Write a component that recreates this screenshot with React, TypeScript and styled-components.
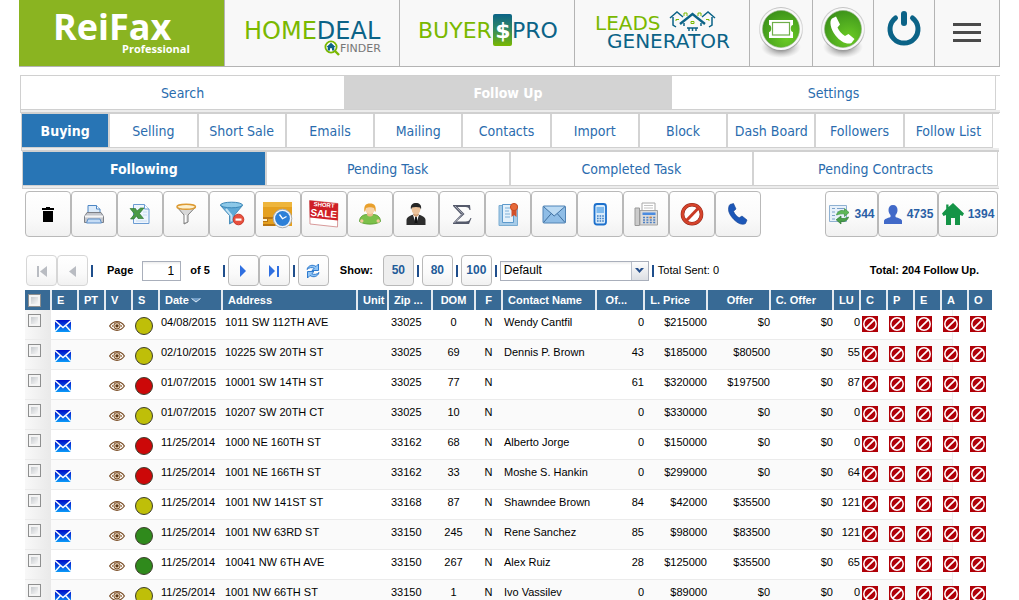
import React from "react";
import styled, { createGlobalStyle, css } from "styled-components";

const GlobalStyle = createGlobalStyle`
  html { scrollbar-width: none; }
  *, *::before, *::after { box-sizing: border-box; }
  body {
    margin: 0;
    background: #fff;
    color: #000;
    font: 11px/13px "Liberation Sans", Arial, sans-serif;
  }
  button, input, select { font: inherit; color: inherit; margin: 0; }
  svg { display: block; flex: none; }
`;

const GREEN = "#7ab800";
const TEAL = "#0b6387";

/* ---------- top banner ---------- */

const Banner = styled.header`
  display: grid;
  grid-template-columns: 206fr 175fr 175fr 175fr 63fr 61fr 61fr 65fr;
  height: 67px;
  margin: 0 19px;
  border-bottom: 1px solid #b4b4b4;
`;

const BannerLink = styled.a<{ $brand?: boolean }>`
  display: flex;
  align-items: center;
  justify-content: center;
  overflow: hidden;
  text-decoration: none;
  border-right: 1px solid #b4b4b4;
  background: ${(p) => (p.$brand ? "#8ab421" : "#f8f8f8")};
`;

const BannerButton = styled.button`
  display: flex;
  align-items: center;
  justify-content: center;
  padding: 0;
  border: 0;
  border-right: 1px solid #b4b4b4;
  background: #f8f8f8;
  cursor: pointer;
`;

const LogoSvg = styled.svg`
  font-family: "DejaVu Sans", Verdana, sans-serif;
`;

const ReiFaxLogo = () => (
  <LogoSvg width="205" height="66" viewBox="0 0 205 66" fill="#fff" fontWeight="700">
    <text x="34" y="40" fontFamily="'Open Sans', sans-serif" fontSize="36">ReiFax</text>
    <text x="103" y="53" fontFamily="'Open Sans', sans-serif" fontSize="11">Professional</text>
  </LogoSvg>
);

const HomeDealLogo = () => (
  <LogoSvg width="174" height="66" viewBox="0 0 174 66">
    <text x="19" y="39" fontSize="24" fill={GREEN}>
      HOME<tspan fill={TEAL}>DEAL</tspan>
    </text>
    <circle cx="106" cy="47" r="5.6" fill="#fff" stroke={GREEN} strokeWidth="1.8" />
    <path d="M110 51l4 4" stroke={GREEN} strokeWidth="2.4" />
    <path d="M101.500 47l4.500-4.200 4.500 4.200h-1.200v3.500h-2.300v-2.300h-2v2.300h-2.300V47z" fill={TEAL} />
    <text x="115" y="52" fontSize="11" fill="#777">FINDER</text>
  </LogoSvg>
);

const BuyersProLogo = () => (
  <LogoSvg width="174" height="66" viewBox="0 0 174 66">
    <defs>
      <linearGradient id="dollar" x1="0" y1="0" x2="0" y2="1">
        <stop offset="0" stopColor="#0b6387" />
        <stop offset="0.45" stopColor="#2f8766" />
        <stop offset="1" stopColor="#7ab800" />
      </linearGradient>
    </defs>
    <text x="18" y="38" fontSize="22" fill={GREEN}>BUYER</text>
    <rect x="93" y="14" width="19" height="32" rx="2" fill="url(#dollar)" />
    <text x="103" y="38" fontSize="22" fontWeight="700" fill="#fff" textAnchor="middle">$</text>
    <text x="112" y="38" fontSize="22" fill={TEAL}>PRO</text>
  </LogoSvg>
);

const LeadsLogo = () => (
  <LogoSvg width="174" height="66" viewBox="0 0 174 66">
    <text x="20" y="30" fontSize="20" fill={GREEN}>LEADS</text>
    <text x="32" y="48" fontSize="20" fill={TEAL}>GENERATOR</text>
    <g fill="none" stroke={TEAL} strokeWidth="1.500">
      <path d="M95 18l7-6 6 5M98 17v8l3 2M140 18l-7-6-6 5M137 17v8l-3 2" />
      <path d="M105 24l12.500-10L130 24" strokeWidth="2.400" />
      <path d="M109 23v3M126 23v3M112 28h11M114 28v3M117.500 28v3M121 28v3" />
    </g>
    <g fill="none" stroke={GREEN} strokeWidth="1">
      <path d="M109 16v-3h3v3M123 16v-3h3v3M101 21v-1.500h3M134 21v-1.500h-3M116 23.500v-2h3v2z" />
    </g>
  </LogoSvg>
);

const Orb = ({ children, id }: { children: React.ReactNode; id: string }) => (
  <svg width="56" height="64" viewBox="0 0 56 64">
    <defs>
      <radialGradient id={id} cx="0.65" cy="0.75" r="0.8">
        <stop offset="0" stopColor="#6bcb24" />
        <stop offset="0.6" stopColor="#4ea91f" />
        <stop offset="1" stopColor="#3a9018" />
      </radialGradient>
      <linearGradient id={id + "rim"} x1="0" y1="0" x2="0" y2="1">
        <stop offset="0" stopColor="#c4c4c4" />
        <stop offset="0.5" stopColor="#dcdcdc" />
        <stop offset="1" stopColor="#9a9a9a" />
      </linearGradient>
      <radialGradient id={id + "shade"}>
        <stop offset="0.4" stopColor="#666" stopOpacity="0.55" />
        <stop offset="1" stopColor="#999" stopOpacity="0" />
      </radialGradient>
    </defs>
    <ellipse cx="28" cy="46" rx="20" ry="11" fill={`url(#${id}shade)`} />
    <circle cx="28" cy="28" r="22" fill={`url(#${id}rim)`} />
    <circle cx="28" cy="28" r="21" fill="#f8f8f8" />
    <circle cx="28" cy="28" r="18.500" fill={`url(#${id})`} stroke="#8fae80" strokeWidth=".6" />
    {children}
  </svg>
);

/* ---------- tab bars ---------- */

const TabBar = styled.nav<{ $left: number; $right: number; $columns: string; $end: number }>`
  display: grid;
  grid-template-columns: ${(p) => p.$columns};
  height: 38px;
  margin: 0 ${(p) => p.$right}px 0 ${(p) => p.$left}px;
  padding: 0 ${(p) => p.$end}px 3px 0;
  border-left: 1px solid #d0d0d0;
  border-top: 1px solid #d0d0d0;
  border-bottom: 1px solid #d0d0d0;
  background: linear-gradient(#ececec, #ececec) bottom / 100% 2px no-repeat;
  font: 14px/18px "DejaVu Sans Condensed", Tahoma, sans-serif;
`;

type TabTone = "none" | "blue" | "gray";

const Tab = styled.a<{ $tone: TabTone; $rule: number }>`
  display: flex;
  align-items: center;
  justify-content: center;
  height: 34px;
  overflow: hidden;
  white-space: nowrap;
  text-decoration: none;
  color: #2a6cae;
  border-bottom: 1px solid #d0d0d0;
  border-right: ${(p) => p.$rule}px solid #d3d3d3;
  &:last-child { border-right-width: 1px; }
  ${(p) => p.$tone === "blue" && css`background: #2875b5; color: #fff; font-weight: 700;`}
  ${(p) => p.$tone === "gray" && css`background: #d3d3d3; color: #fff; font-weight: 700;`}
`;

const Tabs = (props: {
  items: string[]; active: string; tone: TabTone; left: number; right: number;
  end: number; rule: number; columns?: string;
}) => (
  <TabBar
    $left={props.left}
    $right={props.right}
    $end={props.end}
    $columns={props.columns ?? `repeat(${props.items.length}, minmax(0, 1fr))`}
  >
    {props.items.map((t) => (
      <Tab key={t} href="#" $rule={props.rule} $tone={t === props.active ? props.tone : "none"}>{t}</Tab>
    ))}
  </TabBar>
);

/* ---------- tool buttons ---------- */

const Toolbar = styled.div`
  display: flex;
  justify-content: space-between;
  margin: 2px 21px 0 25px;
`;

const Group = styled.div`
  display: flex;
`;

const PushButton = styled.button`
  display: flex;
  align-items: center;
  justify-content: center;
  padding: 0;
  border: 1px solid #b9b9b9;
  border-radius: 4px;
  background: linear-gradient(#fff 0%, #fafafa 60%, #f1f1f1 100%);
  cursor: pointer;
`;

const ToolButton = styled(PushButton)`
  width: 46px;
  height: 46px;
`;

const CountButton = styled(PushButton)<{ $width: number }>`
  width: ${(p) => p.$width}px;
  height: 46px;
  gap: 4px;
  color: #2a5fa5;
  font-size: 12px;
  font-weight: 700;
`;

const Icon = ({ children }: { children: React.ReactNode }) => (
  <svg width="30" height="30" viewBox="0 0 30 30" aria-hidden="true">{children}</svg>
);

const tools: { name: string; art: React.ReactNode }[] = [
  {
    name: "Delete",
    art: <path d="M13 8h4v1h4v2H9V9h4zM10 12h10v11H10z" fill="#000" />,
  },
  {
    name: "Print",
    art: (
      <>
        <path d="M9 15V6.500h8.500L21 10v5z" fill="#dcebfa" stroke="#4d86c4" />
        <path d="M17.500 6.500V10H21" fill="#fff" stroke="#4d86c4" />
        <path d="M8 13.500h14l2.500 4v6h-19v-6z" fill="#c3c6cc" stroke="#7d8087" />
        <path d="M6 17.500h18" stroke="#f4f4f4" strokeWidth="2" />
        <path d="M9 20h12l1.500 4h-15z" fill="#c5dcf5" stroke="#5d8fc8" />
      </>
    ),
  },
  {
    name: "Excel",
    art: (
      <>
        <path d="M8.500 5.500h11l4.500 4.500v14.500H8.500z" fill="#eef5fd" stroke="#6b9cd3" />
        <path d="M19.500 5.500V10H24" fill="#fff" stroke="#6b9cd3" />
        <path d="M18 13h4M18 16h4M11 22h11" stroke="#c8dcf2" />
        <path d="M5 9.500h5.500L12 12l3.500-3H19l-4.500 5.500 4 5H13L11.500 17 9 20H5.500l4-5z" fill="#4b9a45" stroke="#256f2b" strokeWidth=".6" />
      </>
    ),
  },
  {
    name: "Filter",
    art: (
      <>
        <path d="M6 8l7 8v9l4-2v-7l7.500-8z" fill="#d8d8d8" stroke="#7c7c7c" />
        <path d="M14.500 16v7" stroke="#fff" strokeWidth="1.500" />
        <ellipse cx="15.200" cy="7.800" rx="9.300" ry="2.500" fill="#fdf1d0" stroke="#dd9a32" strokeWidth="1.400" />
      </>
    ),
  },
  {
    name: "Remove filter",
    art: (
      <>
        <path d="M3.500 6.500l9 10v8.500l5-3v-6l8-9.500z" fill="#5fa9d6" stroke="#357fb0" strokeWidth=".8" />
        <path d="M9 10l5.500 6.500v6" stroke="#c0e2f5" strokeWidth="2" fill="none" />
        <ellipse cx="14.500" cy="6" rx="11" ry="2.800" fill="#8cc8e8" stroke="#3c88b8" />
        <circle cx="21.500" cy="20.500" r="5.300" fill="#e8503d" stroke="#c9382a" />
        <rect x="18.500" y="19.500" width="6" height="2.200" fill="#fff" />
      </>
    ),
  },
  {
    name: "Schedule",
    art: (
      <>
        <path d="M0 3h29v24H0z" fill="#e5a01f" />
        <path d="M0 3h29v5H0z" fill="#eeb53c" />
        <path d="M0 18h11v2H5v3H0zM0 25h12v2H0z" fill="#b87512" />
        <path d="M0 20h4v2H0z" fill="#fff3cf" />
        <circle cx="19.500" cy="19.500" r="9.300" fill="#f4f6f8" stroke="#a9adb2" />
        <circle cx="19.500" cy="19.500" r="7.400" fill="#2d80d8" />
        <path d="M16.500 15.500l3 4.200 4-2.200" stroke="#fff" strokeWidth="1.300" fill="none" />
      </>
    ),
  },
  {
    name: "Short sale",
    art: (
      <>
        <path d="M.5 1.500L29 4.500 28.500 28 1 25z" fill="#fff" stroke="#d89a9a" />
        <path d="M.5 1.500L29 4.500 28.800 21.500 .9 18.500z" fill="#cf1f26" />
        <g fill="#fff" fontFamily="'Liberation Sans', sans-serif" fontWeight="700" textAnchor="middle" transform="rotate(5 15 12)">
          <text x="14.500" y="8" fontSize="6">SHORT</text>
          <text x="15" y="18" fontSize="10">SALE</text>
        </g>
      </>
    ),
  },
  {
    name: "Agent",
    art: (
      <>
        <path d="M4.500 22.500c0-5 4-7 7-7h7c3 0 7 2 7 7-4 3.500-17 3.500-21 0z" fill="#7cc04a" stroke="#569a2c" strokeWidth=".8" />
        <circle cx="6.800" cy="22" r="1.700" fill="#f3c99a" /><circle cx="23.200" cy="22" r="1.700" fill="#f3c99a" />
        <path d="M12 16c1.500 2 4.500 2 6 0v-2h-6z" fill="#e9b988" />
        <circle cx="15" cy="10" r="5" fill="#f7d3a8" />
        <path d="M9.500 13c-1-6 1-8.500 5.500-8.500s6.500 2.500 5.500 8.500c-1-1-1-3-1.500-4-2-1-6-1-8 0-.5 1-.5 3-1.500 4z" fill="#e9a02c" />
      </>
    ),
  },
  {
    name: "Contact",
    art: (
      <>
        <path d="M5.500 26v-5c0-3 4-4.500 7-5.500h5c3 1 7 2.500 7 5.500v5z" fill="#2d2d2d" />
        <path d="M12 16l3 9 3-9z" fill="#fff" />
        <path d="M14.200 17.500h1.600l.6 7h-2.800z" fill="#111" />
        <path d="M12.500 13h5v3.500L15 18l-2.500-1.500z" fill="#d6a377" />
        <ellipse cx="15" cy="10.500" rx="4.300" ry="5" fill="#edc39b" />
        <path d="M10 10.500C9 5.500 12 4 15 4s6 1.500 5 6.500l-1-2c-2-.8-6-.8-8 0z" fill="#262626" />
      </>
    ),
  },
  {
    name: "Totals",
    art: (
      <>
        <path d="M6 6h17l.5 5h-1c-.5-2-1.500-3-4-3h-8l7 7-8 7.500h9c3 0 4-1 5-3.500h1L22 25H6v-1l8-8.500L6 7z" fill="#555a6b" />
        <path d="M8 7l7.500 7.700L7.500 24" stroke="#a8abb8" fill="none" />
      </>
    ),
  },
  {
    name: "Contract",
    art: (
      <>
        <path d="M6 6.500h18.500v20H6z" fill="#a6cbe8" stroke="#7badd2" />
        <path d="M9.500 5.500h11v18h-11z" fill="#e4f1fb" stroke="#5d9acc" />
        <path d="M12 9h5M12 12h4M12 15h5M12 18h5" stroke="#7fb0d8" />
        <path d="M18.500 9h5v9l-2.500-2-2.500 2z" fill="#d2502b" />
        <circle cx="21" cy="8" r="3.600" fill="#e66a39" stroke="#c84a22" />
      </>
    ),
  },
  {
    name: "E-mail",
    art: (
      <>
        <rect x="4" y="7" width="22.500" height="17" rx="1" fill="#8fbde6" stroke="#5284b5" />
        <path d="M4.500 7.500l10.700 9.500L26 7.500M4.500 23.500l7.800-9M26 23.500l-7.800-9" fill="none" stroke="#3f6f9f" />
        <path d="M5.500 7.800h19.500l-9.800 8.500z" fill="#bbdaf3" />
      </>
    ),
  },
  {
    name: "Text message",
    art: (
      <>
        <rect x="9.500" y="5" width="11.500" height="20.500" rx="2.500" fill="#d9ebfa" stroke="#1d70cc" strokeWidth="1.800" />
        <rect x="11.500" y="8" width="7.500" height="6" fill="#7db9ee" />
        <path d="M12 17h7M12 19.500h7M12 22h7" stroke="#3f7fc4" strokeDasharray="1.600 1" strokeWidth="1.300" />
      </>
    ),
  },
  {
    name: "Fax",
    art: (
      <>
        <path d="M11 4h13v10H11z" fill="#fff" stroke="#a8a8a8" />
        <path d="M13 6.500h9M13 9h9" stroke="#c4c4c4" />
        <path d="M9 11.500h17.500v14.500H9z" fill="#dadada" stroke="#a3a3a3" />
        <path d="M4 9h4.500v17.500H4z" fill="#cbcbcb" stroke="#999" />
        <path d="M11.500 13.500h13v2.500h-13z" fill="#4a8be0" />
        <path d="M12 18.500h13M12 21h13M12 23.500h13" stroke="#4d80c4" strokeDasharray="2 1.400" strokeWidth="1.400" />
        <path d="M18.500 18.500h2" stroke="#e0822c" strokeWidth="1.500" />
      </>
    ),
  },
  {
    name: "Block",
    art: (
      <>
        <circle cx="15" cy="15.200" r="9.500" fill="#fff" stroke="#8d2215" strokeWidth="3.600" />
        <circle cx="15" cy="15.200" r="9.500" fill="none" stroke="#d5442c" strokeWidth="2.600" />
        <path d="M9 22L21.500 9" stroke="#c93a25" strokeWidth="3" />
      </>
    ),
  },
  {
    name: "Call",
    art: (
      <path d="M7 5.500l3.500-1 2.500 5.500-2.500 2.300c1.200 3 3 5 5.700 6.500l2.800-1.800 5 4-1.500 3.500c-2 1.500-6 1-10-2.500S5.500 14 5.500 10.500C5.500 8 6 6.500 7 5.500z" fill="#1c57b8" stroke="#123f90" strokeWidth=".6" />
    ),
  },
];

const RefreshListIcon = () => (
  <svg width="22" height="24" viewBox="0 0 22 24" aria-hidden="true">
    <path d="M1.500 3.500h17v16h-17z" fill="#e8f1fa" stroke="#8fb1d2" />
    <path d="M4 6.500h3M9 6.500h7M4 10h3M9 10h4M4 13.500h3M4 17h3" stroke="#7ba1c8" />
    <path d="M8.500 13c1-4 5-5.500 8-4V6.500l4.500 4-4.500 4V12c-3-.5-5 0-8 1z" fill="#5fb858" stroke="#3d8f3f" strokeWidth=".7" />
    <path d="M20.500 15c-1 4-5 5.500-7.500 4.200V22l-4.800-4.200L13 14v2.400c3 .6 4.500-.2 7.500-1.400z" fill="#4aa04a" stroke="#2f7a31" strokeWidth=".7" />
  </svg>
);

const PersonIcon = () => (
  <svg width="20" height="22" viewBox="0 0 20 22" aria-hidden="true">
    <path d="M10 2c3 0 4.500 2 4.500 5 0 2.500-1 4-2 5v2c3 1 6.500 2 6.500 4v3H1v-3c0-2 3.500-3 6.500-4v-2c-1-1-2-2.500-2-5 0-3 1.500-5 4.500-5z" fill="#4169c8" />
  </svg>
);

const HouseIcon = () => (
  <svg width="22" height="24" viewBox="0 0 22 24" aria-hidden="true">
    <path d="M11 1L6.500 5V2.500H4.200V7L0 11.500 1.500 14 4 13v10h5v-7h4v7h5V13l2.500 1 1.500-2.500z" fill="#159447" />
  </svg>
);

/* ---------- paging bar ---------- */

const PagingBar = styled.div`
  display: flex;
  align-items: center;
  height: 31px;
  margin: 18px 40px 4px 26px;
  font-weight: 700;
`;

const PageButton = styled(PushButton)<{ $on?: boolean }>`
  width: 31px;
  height: 31px;
  color: #1f5c99;
  font-size: 12px;
  font-weight: 700;
  ${(p) => p.$on && css`background: #eee;`}
  &:disabled { border-color: #d6d6d6; cursor: default; }
`;

const Rule = styled.span`
  width: 2px;
  height: 12px;
  margin: 0 3px;
  background: #1f4e8c;
`;

const PageField = styled.label`
  display: flex;
  align-items: center;
  gap: 9px;
  margin: 0 10px 0 11px;
`;

const PageInput = styled.input`
  width: 39px;
  height: 20px;
  padding: 0 6px;
  border: 1px solid #a9afbb;
  background: linear-gradient(#ededed, #fff 3px);
  font-size: 12px;
  font-weight: 400;
  text-align: right;
`;

const ShowLabel = styled.span`
  margin: 0 10px 0 11px;
`;

const SelectBox = styled.span`
  position: relative;
  width: 149px;
  height: 20px;
  border: 1px solid #a9afbb;
  background: linear-gradient(#ededed, #fff 3px);
`;

const Select = styled.select`
  appearance: none;
  display: block;
  width: 100%;
  height: 18px;
  padding: 0 20px 0 3px;
  border: 0;
  background: transparent;
  font-size: 12px;
  font-weight: 400;
`;

const SelectArrow = styled.span`
  position: absolute;
  top: 0;
  right: 0;
  display: flex;
  align-items: center;
  justify-content: center;
  width: 17px;
  height: 18px;
  border-left: 1px solid #b9bfca;
  background: linear-gradient(#fdfdfd, #dcdfe4);
  pointer-events: none;
`;

const Sent = styled.span`
  margin-left: 1px;
  font-weight: 400;
`;

const Total = styled.span`
  margin-left: auto;
`;

const PagerIcon = ({ d, color, bar }: { d: string; color: string; bar?: string }) => (
  <svg width="16" height="16" viewBox="0 0 16 16" aria-hidden="true">
    <path d={d} fill={color} />
    {bar && <path d={bar} fill={color} />}
  </svg>
);

/* ---------- grid ---------- */

const GridWrap = styled.main`
  margin: 0 27px 0 25px;
`;

const Grid = styled.table`
  width: 100%;
  table-layout: fixed;
  border-collapse: collapse;
  border-spacing: 0;
`;

type Align = "left" | "right" | "center";

const HeadCell = styled.th<{ $align: Align; $inset: number }>`
  height: 20px;
  padding: 0 ${(p) => (p.$align === "right" ? p.$inset : 0)}px 0 ${(p) => (p.$align === "left" ? p.$inset : 0)}px;
  background: #386a95;
  color: #fff;
  font-weight: 700;
  text-align: ${(p) => p.$align};
  white-space: nowrap;
  box-shadow: inset -1px 0 0 #e4eaf0, inset 1px 0 0 #e4eaf0;
  &:first-child { box-shadow: inset -1px 0 0 #e4eaf0; }
  &:last-child { box-shadow: inset 1px 0 0 #e4eaf0; }
`;

const HeadFlex = styled.span`
  display: flex;
  align-items: center;
  gap: 2px;
`;

const Row = styled.tr<{ $shade: boolean }>`
  height: 30px;
  background:
    linear-gradient(#ebebeb, #ebebeb) left bottom / calc(100% - 40px) 1px no-repeat,
    linear-gradient(90deg, transparent calc(100% - 1px), #f0f0f0 0) left top / calc(100% - 39px) 100% no-repeat,
    linear-gradient(${(p) => (p.$shade ? "#fafafa, #fafafa" : "#fff, #fff")}) left top / calc(100% - 40px) 100% no-repeat;
`;

const Cell = styled.td<{ $align?: Align; $left?: number; $top?: number }>`
  padding: ${(p) => p.$top ?? 6}px 0 0 ${(p) => p.$left ?? 0}px;
  text-align: ${(p) => p.$align ?? "left"};
  vertical-align: top;
  white-space: nowrap;
`;

const TickCell = styled(Cell)`
  background: linear-gradient(90deg, #f8f8f8, #e9e9e9) left top / 26px 29px no-repeat;
`;

const Tick = styled.input`
  appearance: none;
  display: block;
  width: 13px;
  height: 13px;
  border: 1px solid #8e8f8f;
  background: linear-gradient(135deg, #c6cace, #f6f6f6) content-box, #f4f4f4;
  padding: 2px;
`;

const StatusDot = styled.span<{ $color: string }>`
  display: block;
  width: 18px;
  height: 18px;
  border: 1px solid #3c3c2c;
  border-radius: 50%;
  background: ${(p) => p.$color};
`;

const MailIcon = () => (
  <svg width="16" height="12" viewBox="0 0 16 12" aria-label="E-mail">
    <defs>
      <linearGradient id="mail" x1="0" y1="0" x2="0" y2="1">
        <stop offset="0" stopColor="#0010c8" />
        <stop offset="0.5" stopColor="#0848e0" />
        <stop offset="1" stopColor="#0a9cf8" />
      </linearGradient>
    </defs>
    <rect width="16" height="12" fill="url(#mail)" />
    <path d="M0 .5l8 7 8-7M0 11.500l5.500-6M16 11.500l-5.500-6" fill="none" stroke="#fff" strokeWidth="1.400" />
  </svg>
);

const EyeIcon = () => (
  <svg width="16" height="10" viewBox="0 0 16 10" aria-label="Viewed">
    <path d="M.6 5C3 1.500 5.500.7 8 .7S13 1.500 15.400 5C13 8.500 10.500 9.300 8 9.300S3 8.500.6 5z" fill="#fff" stroke="#7b4f28" strokeWidth="1.200" />
    <circle cx="8" cy="4.800" r="3.200" fill="#e8d3b8" stroke="#7b4f28" />
    <circle cx="8" cy="4.800" r="1.600" fill="#5c3818" />
    <path d="M3.500 4v2M12.500 4v2" stroke="#b18a66" />
  </svg>
);

const BanIcon = () => (
  <svg width="16" height="16" viewBox="0 0 16 16" aria-label="No">
    <rect width="16" height="16" fill="#b00008" />
    <circle cx="8" cy="8" r="6.200" fill="none" stroke="#fff" strokeWidth="1.500" />
    <path d="M3.800 12.200l8.400-8.400" stroke="#fff" strokeWidth="1.700" />
  </svg>
);

const columns: { label: string; width: number; align: Align; inset: number }[] = [
  { label: "", width: 26, align: "left", inset: 3 },
  { label: "E", width: 27, align: "left", inset: 6 },
  { label: "PT", width: 27, align: "left", inset: 6 },
  { label: "V", width: 27, align: "left", inset: 6 },
  { label: "S", width: 27, align: "left", inset: 6 },
  { label: "Date", width: 63, align: "left", inset: 6 },
  { label: "Address", width: 135, align: "left", inset: 6 },
  { label: "Unit", width: 31, align: "left", inset: 6 },
  { label: "Zip ...", width: 44, align: "left", inset: 6 },
  { label: "DOM", width: 43, align: "center", inset: 0 },
  { label: "F", width: 27, align: "center", inset: 0 },
  { label: "Contact Name", width: 94, align: "left", inset: 6 },
  { label: "Of...", width: 48, align: "right", inset: 17 },
  { label: "L. Price", width: 63, align: "right", inset: 17 },
  { label: "Offer", width: 63, align: "right", inset: 17 },
  { label: "C. Offer", width: 63, align: "right", inset: 17 },
  { label: "LU", width: 27, align: "left", inset: 6 },
  { label: "C", width: 27, align: "left", inset: 6 },
  { label: "P", width: 27, align: "left", inset: 6 },
  { label: "E", width: 27, align: "left", inset: 6 },
  { label: "A", width: 27, align: "left", inset: 6 },
  { label: "O", width: 24, align: "left", inset: 6 },
];

const statusColors = { y: "#bfbf08", r: "#cc0808", g: "#2f8a1c" };

type Lead = [string, keyof typeof statusColors, string, string, number, string, number, number, number, number];

const leads: Lead[] = [
  ["04/08/2015", "y", "1011 SW 112TH AVE", "33025", 0, "Wendy Cantfil", 0, 215000, 0, 0],
  ["02/10/2015", "y", "10225 SW 20TH ST", "33025", 69, "Dennis P. Brown", 43, 185000, 80500, 55],
  ["01/07/2015", "r", "10001 SW 14TH ST", "33025", 77, "", 61, 320000, 197500, 87],
  ["01/07/2015", "y", "10207 SW 20TH CT", "33025", 10, "", 0, 330000, 0, 0],
  ["11/25/2014", "r", "1000 NE 160TH ST", "33162", 68, "Alberto Jorge", 0, 150000, 0, 0],
  ["11/25/2014", "r", "1001 NE 166TH ST", "33162", 33, "Moshe S. Hankin", 0, 299000, 0, 64],
  ["11/25/2014", "y", "1001 NW 141ST ST", "33168", 87, "Shawndee Brown", 84, 42000, 35500, 121],
  ["11/25/2014", "g", "1001 NW 63RD ST", "33150", 245, "Rene Sanchez", 85, 98000, 83500, 121],
  ["11/25/2014", "g", "10041 NW 6TH AVE", "33150", 267, "Alex Ruiz", 28, 125000, 35500, 65],
  ["11/25/2014", "y", "1001 NW 66TH ST", "33150", 1, "Ivo Vassilev", 0, 89000, 0, 0],
];

const LeadRow = ({ lead, index }: { lead: Lead; index: number }) => {
  const [date, status, address, zip, dom, contact, offers, price, offer, lu] = lead;
  return (
    <Row $shade={index % 2 === 1}>
      <TickCell $top={4} $left={3}><Tick type="checkbox" aria-label={`Select ${address}`} /></TickCell>
      <Cell $top={10} $left={4}><MailIcon /></Cell>
      <Cell />
      <Cell $top={11} $left={4}><EyeIcon /></Cell>
      <Cell $top={7} $left={3}><StatusDot $color={statusColors[status]} /></Cell>
      <Cell $left={2}>{date}</Cell>
      <Cell $left={3}>{address}</Cell>
      <Cell />
      <Cell $left={3}>{zip}</Cell>
      <Cell $align="center">{dom}</Cell>
      <Cell $align="center">N</Cell>
      <Cell $left={2}>{contact}</Cell>
      <Cell $align="right">{offers}</Cell>
      <Cell $align="right">${price}</Cell>
      <Cell $align="right">${offer}</Cell>
      <Cell $align="right">$0</Cell>
      <Cell $align="right">{lu}</Cell>
      {["C", "P", "E", "A", "O"].map((k) => (
        <Cell key={k} $left={2}><BanIcon /></Cell>
      ))}
    </Row>
  );
};

const TabStack = styled.div`
  margin-top: 8px;
`;

export default function App() {
  return (
    <>
      <GlobalStyle />
      <Banner>
        <BannerLink href="#" $brand><ReiFaxLogo /></BannerLink>
        <BannerLink href="#"><HomeDealLogo /></BannerLink>
        <BannerLink href="#"><BuyersProLogo /></BannerLink>
        <BannerLink href="#"><LeadsLogo /></BannerLink>
        <BannerButton aria-label="Ticket">
          <Orb id="ticket">
            <path d="M16 19h24v5c-3 0-3 7 0 7v6H16v-6c3 0 3-7 0-7z" fill="#fff" />
            <rect x="19.500" y="21.500" width="17" height="12.500" fill="#fff" stroke="#6fae4a" strokeWidth="1.200" />
          </Orb>
        </BannerButton>
        <BannerButton aria-label="Phone">
          <Orb id="phone">
            <path d="M17 17.500l4-2 4 8-2.500 3c1.500 3.500 4 6.500 7.500 8.500l3.500-2 6 5-3 4c-4 2-11-1-16-7.500S14 20 17 17.500z" fill="#fff" />
          </Orb>
        </BannerButton>
        <BannerButton aria-label="Log out">
          <svg width="36" height="58" viewBox="0 0 36 58" fill="none" stroke="#0b6387" strokeLinecap="round">
            <path d="M9.500 14a14 14 0 1 0 17 0" strokeWidth="5" />
            <path d="M18 10v9" strokeWidth="6" />
          </svg>
        </BannerButton>
        <BannerButton aria-label="Menu">
          <svg width="28" height="20" viewBox="0 0 28 20">
            <path d="M0 0h28v3H0zM0 8h28v3H0zM0 16h28v3H0z" fill="#4a4a4a" />
          </svg>
        </BannerButton>
      </Banner>

      <TabStack>
        <Tabs items={["Search", "Follow Up", "Settings"]} active="Follow Up" tone="gray"
          left={20} right={19} end={4} rule={1} columns="324fr 327fr 324fr" />
        <Tabs items={["Buying", "Selling", "Short Sale", "Emails", "Mailing", "Contacts", "Import", "Block", "Dash Board", "Followers", "Follow List"]}
          active="Buying" tone="blue" left={21} right={20} end={6} rule={2} />
        <Tabs items={["Following", "Pending Task", "Completed Task", "Pending Contracts"]}
          active="Following" tone="blue" left={22} right={20} end={1} rule={2} />
      </TabStack>

      <Toolbar>
        <Group>
          {tools.map((t) => (
            <ToolButton key={t.name} aria-label={t.name}><Icon>{t.art}</Icon></ToolButton>
          ))}
        </Group>
        <Group>
          <CountButton $width={53}><RefreshListIcon />344</CountButton>
          <CountButton $width={60}><PersonIcon />4735</CountButton>
          <CountButton $width={60}><HouseIcon />1394</CountButton>
        </Group>
      </Toolbar>

      <PagingBar>
        <PageButton aria-label="First page" disabled>
          <PagerIcon color="#b9bcc2" d="M13 3v11L6 8.500z" bar="M3 3h2v11H3z" />
        </PageButton>
        <PageButton aria-label="Previous page" disabled>
          <PagerIcon color="#b9bcc2" d="M11 3v11L4 8.500z" />
        </PageButton>
        <Rule />
        <PageField>Page <PageInput type="text" defaultValue="1" /> of 5</PageField>
        <Rule />
        <PageButton aria-label="Next page">
          <PagerIcon color="#2f6fe0" d="M5 2v12l6-6z" />
        </PageButton>
        <PageButton aria-label="Last page">
          <PagerIcon color="#2f6fe0" d="M3 2v12l6-6z" bar="M11 3h2v11h-2z" />
        </PageButton>
        <Rule />
        <PageButton aria-label="Refresh">
          <svg width="16" height="16" viewBox="0 0 16 16" aria-hidden="true">
            <path d="M2 6.500C3 2.500 7.500 1 11 3.500L13.500 1v6.500H7L9.200 5.300C7 4 4 4.500 2 6.500z" fill="#8fc4f5" stroke="#1f6fc8" strokeWidth=".9" />
            <path d="M14 9.500c-1 4-5.500 5.500-9 3L2.500 15V8.500H9L6.800 10.700C9 12 12 11.500 14 9.500z" fill="#8fc4f5" stroke="#1f6fc8" strokeWidth=".9" />
          </svg>
        </PageButton>
        <ShowLabel>Show:</ShowLabel>
        <PageButton $on>50</PageButton>
        <Rule />
        <PageButton>80</PageButton>
        <Rule />
        <PageButton>100</PageButton>
        <Rule />
        <SelectBox>
          <Select aria-label="Template" defaultValue="Default">
            <option>Default</option>
          </Select>
          <SelectArrow>
            <svg width="9" height="7" viewBox="0 0 9 7"><path d="M0 1h3l1.500 2L6 1h3L4.500 6z" fill="#27508c" /></svg>
          </SelectArrow>
        </SelectBox>
        <Rule />
        <Sent>Total Sent: 0</Sent>
        <Total>Total: 204 Follow Up.</Total>
      </PagingBar>

      <GridWrap>
        <Grid>
          <colgroup>
            {columns.map((c, i) => <col key={i} width={c.width} />)}
          </colgroup>
          <thead>
            <tr>
              {columns.map((c, i) => (
                <HeadCell key={i} $align={c.align} $inset={c.inset}>
                  {i === 0 && <Tick type="checkbox" aria-label="Select all" />}
                  {c.label === "Date" ? (
                    <HeadFlex>
                      Date
                      <svg width="10" height="6" viewBox="0 0 10 6">
                        <path d="M.5 1h9L5 5.500z" fill="#6f9cc6" />
                        <path d="M.5 1.500L5 5l4.500-3.500" fill="none" stroke="#dbe9f7" />
                      </svg>
                    </HeadFlex>
                  ) : c.label}
                </HeadCell>
              ))}
            </tr>
          </thead>
          <tbody>
            {leads.map((lead, i) => <LeadRow key={i} lead={lead} index={i} />)}
          </tbody>
        </Grid>
      </GridWrap>
    </>
  );
}
